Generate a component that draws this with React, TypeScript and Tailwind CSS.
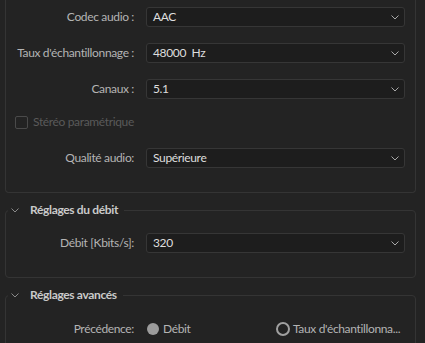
import React from "react";

const Chevron = () => (
  <svg width="8" height="5" viewBox="0 0 8 5" className="shrink-0">
    <path d="M0.5 0.5 L4 4 L7.5 0.5" fill="none" stroke="#a8a8a8" strokeWidth="1" />
  </svg>
);

const SectionChevron = () => (
  <svg width="8" height="5" viewBox="0 0 8 5" className="shrink-0">
    <path d="M0.5 0.5 L4 4 L7.5 0.5" fill="none" stroke="#8a8a8a" strokeWidth="1" />
  </svg>
);

const Select = ({ value }: { value: string }) => (
  <div className="ml-[12px] flex h-[20px] w-[259px] items-center justify-between rounded-[3px] border border-[#363636] bg-[#1d1d1d] pl-[6px] pr-[5px]">
    <span className="whitespace-pre text-[#dedede]">{value}</span>
    <Chevron />
  </div>
);

const Row = ({ label, value, className = "" }: { label: string; value: string; className?: string }) => (
  <div className={`flex h-[20px] items-center ${className}`}>
    <div className="w-[128px] whitespace-nowrap text-right text-[#b4b4b4]">{label}</div>
    <Select value={value} />
  </div>
);

const Legend = ({ title }: { title: string }) => (
  <legend className="ml-[2px] px-[3px]">
    <span className="flex h-[16px] items-center">
      <SectionChevron />
      <span className="ml-[11px] pr-[3px] font-bold text-[#cacaca]">{title}</span>
    </span>
  </legend>
);

export default function App() {
  return (
    <div className="h-[343px] w-[425px] overflow-hidden bg-[#232323] font-['Lato',sans-serif] text-[12px] leading-[16px] tracking-[-0.35px]">
      <div className="ml-[5px] w-[411px] rounded-b-[4px] border-x border-b border-[#343434] pb-[24px] pt-[7px]">
        <Row label="Codec audio :" value="AAC" />
        <Row label="Taux d'échantillonnage :" value="48000  Hz" className="mt-[16px]" />
        <Row label="Canaux :" value="5.1" className="mt-[16px]" />
        <div className="mt-[13px] flex h-[20px] items-center pl-[9px]">
          <div className="h-[13px] w-[13px] rounded-[2px] border border-[#4a4a4a]" />
          <span className="ml-[5px] text-[#5a5a5a]">Stéréo paramétrique</span>
        </div>
        <Row label="Qualité audio:" value="Supérieure" className="mt-[16px]" />
      </div>

      <fieldset className="ml-[5px] mt-[9px] w-[411px] rounded-[4px] border border-[#343434] pb-[24px] pt-[15px]">
        <Legend title="Réglages du débit" />
        <Row label="Débit [Kbits/s]:" value="320" />
      </fieldset>

      <fieldset className="ml-[5px] mt-[9px] w-[411px] rounded-[4px] border border-[#343434] pb-[30px] pt-[16px]">
        <Legend title="Réglages avancés" />
        <div className="flex h-[20px] items-center">
          <div className="w-[128px] whitespace-nowrap text-right text-[#b4b4b4]">Précédence:</div>
          <div className="ml-[13px] flex w-[129px] items-center">
            <div className="h-[12px] w-[12px] rounded-full bg-[#9c9c9c]" />
            <span className="ml-[4px] text-[#b4b4b4]">Débit</span>
          </div>
          <div className="flex items-center">
            <div className="h-[14px] w-[14px] rounded-full border-2 border-[#a0a0a0]" />
            <span className="ml-[3px] whitespace-nowrap text-[#b4b4b4]">Taux d'échantillonna...</span>
          </div>
        </div>
      </fieldset>
    </div>
  );
}
